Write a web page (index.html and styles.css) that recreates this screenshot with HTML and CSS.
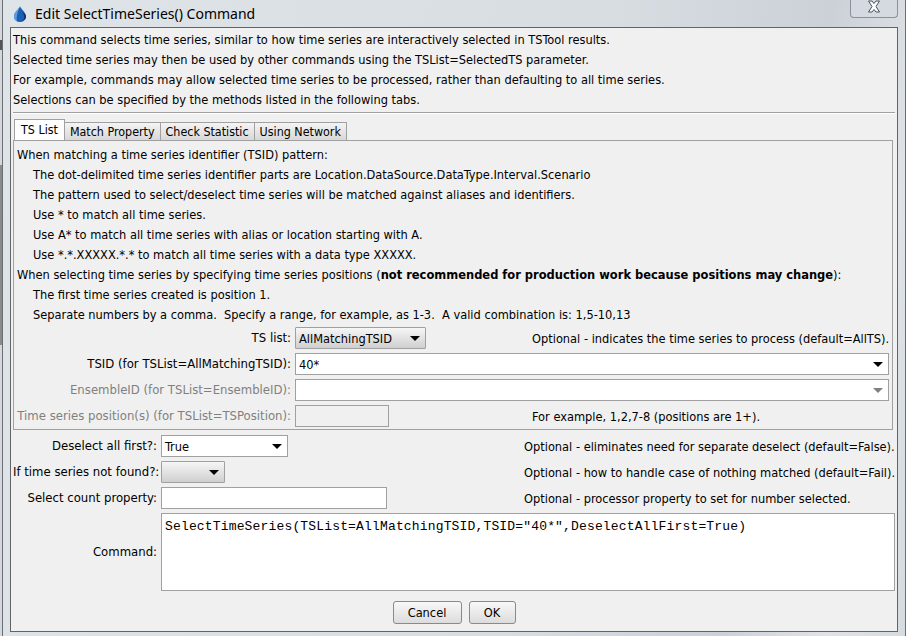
FILE: index.html
```html
<!DOCTYPE html>
<html>
<head>
<meta charset="utf-8">
<title>Edit SelectTimeSeries() Command</title>
<link rel="stylesheet" href="styles.css">
</head>
<body>
<div class="window">
  <div class="titlebar">
    <div class="title-left">
      <svg class="app-icon" width="14" height="16" viewBox="0 0 14 16"><path d="M7 0.5 C9 4 13 6.5 13 10.5 A6 5.5 0 0 1 1 10.5 C1 6.5 5 4 7 0.5Z" fill="#1a5fb4"/><path d="M7 0.5 C5 4 1 6.5 1 10.5 C1 12.5 2 14 4 15 C3 10 5 5 7 0.5Z" fill="#5f9fe0"/><path d="M9 6 C12 9 12 13 9 15 C11.5 14.5 13 12.5 13 10.5 C13 8.5 11 7 9 6Z" fill="#0d2f70"/></svg>
      <span class="title">Edit SelectTimeSeries() Command</span>
    </div>
    <div class="close"><svg width="14" height="13" viewBox="0 0 14 13"><path d="M1.5 1 H5 L7 3.5 L9 1 H12.5 L9 6.5 L12.5 12 H9 L7 9.5 L5 12 H1.5 L5 6.5 Z" fill="#fff" stroke="#4a5060" stroke-width="1"/></svg></div>
  </div>
  <div class="content">
    <div class="intro">
      <div class="line">This command selects time series, similar to how time series are interactively selected in TSTool results.</div>
      <div class="line">Selected time series may then be used by other commands using the TSList=SelectedTS parameter.</div>
      <div class="line">For example, commands may allow selected time series to be processed, rather than defaulting to all time series.</div>
      <div class="line">Selections can be specified by the methods listed in the following tabs.</div>
    </div>
    <div class="separator"></div>
    <div class="tabs">
      <div class="tab active">TS List</div>
      <div class="tab">Match Property</div>
      <div class="tab">Check Statistic</div>
      <div class="tab">Using Network</div>
    </div>
    <div class="panel">
      <div class="pline">When matching a time series identifier (TSID) pattern:</div>
      <div class="pline indent">The dot-delimited time series identifier parts are Location.DataSource.DataType.Interval.Scenario</div>
      <div class="pline indent">The pattern used to select/deselect time series will be matched against aliases and identifiers.</div>
      <div class="pline indent">Use * to match all time series.</div>
      <div class="pline indent">Use A* to match all time series with alias or location starting with A.</div>
      <div class="pline indent">Use *.*.XXXXX.*.* to match all time series with a data type XXXXX.</div>
      <div class="pline">When selecting time series by specifying time series positions (<b>not recommended for production work because positions may change</b>):</div>
      <div class="pline indent">The first time series created is position 1.</div>
      <div class="pline indent">Separate numbers by a comma.&nbsp; Specify a range, for example, as 1-3.&nbsp; A valid combination is: 1,5-10,13</div>
      <div class="panel-form">
        <div class="label">TS list:</div>
        <div class="fieldrow">
          <div class="combo gray w-tslist"><span>AllMatchingTSID</span><i class="arrow"></i></div>
          <div class="note note-tslist">Optional - indicates the time series to process (default=AllTS).</div>
        </div>
        <div class="label">TSID (for TSList=AllMatchingTSID):</div>
        <div class="combo white"><span>40*</span><i class="arrow"></i></div>
        <div class="label disabled">EnsembleID (for TSList=EnsembleID):</div>
        <div class="combo white"><span></span><i class="arrow dim"></i></div>
        <div class="label disabled">Time series position(s) (for TSList=TSPosition):</div>
        <div class="fieldrow">
          <div class="input off w-pos"></div>
          <div class="note note-pos">For example, 1,2,7-8 (positions are 1+).</div>
        </div>
      </div>
    </div>
    <div class="form">
      <div class="label">Deselect all first?:</div>
      <div class="fieldrow">
        <div class="combo white w-deselect"><span>True</span><i class="arrow"></i></div>
        <div class="note note-a">Optional - eliminates need for separate deselect (default=False).</div>
      </div>
      <div class="label">If time series not found?:</div>
      <div class="fieldrow">
        <div class="combo gray w-notfound"><span></span><i class="arrow"></i></div>
        <div class="note note-b">Optional - how to handle case of nothing matched (default=Fail).</div>
      </div>
      <div class="label">Select count property:</div>
      <div class="fieldrow">
        <div class="input w-count"></div>
        <div class="note note-c">Optional - processor property to set for number selected.</div>
      </div>
      <div class="label">Command:</div>
      <div class="command">SelectTimeSeries(TSList=AllMatchingTSID,TSID="40*",DeselectAllFirst=True)</div>
    </div>
    <div class="buttons">
      <div class="btn cancel">Cancel</div>
      <div class="btn ok">OK</div>
    </div>
  </div>
</div>
</body>
</html>
```
FILE: styles.css
```css
* { box-sizing: border-box; }
html, body { margin: 0; padding: 0; height: 100%; }
body {
  width: 906px; height: 636px; overflow: hidden;
  padding-left: 2px;
  font-family: "DejaVu Sans Condensed", "DejaVu Sans", sans-serif;
  font-stretch: condensed;
  font-size: 12.7px; color: #000;
  background:
    linear-gradient(#0000 40px, #555 40px, #555 50px, #0000 50px, #0000 165px, #8a8a8a 165px, #8a8a8a 345px, #0000 345px),
    #d4d8dd;
}
b { font-size: 12.75px; }
.window {
  width: 904px; height: 636px; padding: 0 7px 4px 7px;
  display: flex; flex-direction: column;
  border-left: 1px solid #6a6e75; border-right: 1px solid #6a6e75;
  background: linear-gradient(100deg, #dfe4e8 0%, #d8dde2 60%, #ccd1d8 82%, #dfe3e7 92%, #d6dbe0 100%);
}
.titlebar { height: 27px; flex: none; display: flex; justify-content: space-between; align-items: flex-start; }
.title-left { display: flex; align-items: center; gap: 8px; padding: 5px 0 0 3px; }
.app-icon { flex: none; }
.title { font-family: "Noto Sans", sans-serif; font-stretch: normal; font-size: 14px; line-height: 18px; color: #000; }
.close { width: 48px; height: 18px; border: 1px solid #8c9098; border-top: none; border-radius: 0 0 4px 4px; display: flex; justify-content: center; background: #d5dae0; }
.content { flex: 1; background: #f0f0f0; border: 1px solid #646464; display: flex; flex-direction: column; padding: 2px 2px 0 2px; min-height: 0; }
.line { height: 20px; line-height: 20px; white-space: nowrap; }
.intro { flex: none; }
.separator { height: 2px; margin: 2px 0 5px; background: #a0a0a0; border-bottom: 1px solid #fff; }
.tabs { display: flex; align-items: flex-end; height: 21px; padding-left: 1px; font-size: 12.4px; }
.tab { height: 18px; line-height: 18px; padding: 0 5px; background: linear-gradient(#f4f4f4, #d8d8d8); border: 1px solid #a0a0a0; border-bottom: none; white-space: nowrap; margin-right: -1px; }
.tab.active { height: 21px; line-height: 20px; background: #fff; padding: 0 6px; position: relative; z-index: 1; }
.panel { height: 290px; flex: none; margin-right: 2px; background: #f0f0f0; border: 1px solid #a0a0a0; padding: 4px 3px 0 3px; }
.pline { height: 20px; line-height: 20px; white-space: nowrap; }
.indent { padding-left: 16px; }
.panel-form { display: grid; grid-template-columns: 274px 1fr; column-gap: 4px; row-gap: 4px; margin-top: 2px; }
.label { text-align: right; height: 22px; line-height: 22px; white-space: nowrap; font-size: 13px; }
.label.disabled { color: #808080; }
.fieldrow { display: flex; align-items: center; height: 22px; }
.combo { height: 22px; border: 1px solid #a0a0a0; display: flex; align-items: center; justify-content: space-between; padding: 0 5px 0 3px; }
.combo.white { background: #fff; }
.combo.gray { background: linear-gradient(#f6f6f6, #cfcfcf); border-radius: 1px; }
.arrow { width: 0; height: 0; border-left: 5px solid transparent; border-right: 5px solid transparent; border-top: 5px solid #000; }
.arrow.dim { border-top-color: #808080; }
.input { height: 22px; background: #fff; border: 1px solid #a0a0a0; }
.input.off { background: #f0f0f0; }
.w-tslist { width: 131px; }
.w-pos { width: 94px; }
.w-deselect { width: 127px; }
.w-notfound { width: 64px; }
.w-count { width: 226px; }
.note { white-space: nowrap; }
.note-tslist { margin-left: 106px; }
.note-pos { margin-left: 143px; }
.note-a { margin-left: 236px; }
.note-b { margin-left: 299px; }
.note-c { margin-left: 137px; }
.form { display: grid; grid-template-columns: 144px 1fr; column-gap: 4px; row-gap: 4px; margin-top: 5px; }
.command { height: 78px; background: #fff; border: 1px solid #a0a0a0; padding: 5px 3px; font-family: "Liberation Mono", monospace; font-stretch: normal; font-size: 13px; letter-spacing: 0.16px; line-height: 16px; white-space: nowrap; }
.form .label:nth-last-child(2) { height: 78px; line-height: 78px; }
.buttons { display: flex; justify-content: center; gap: 7px; margin-top: 10px; }
.btn { height: 23px; line-height: 21px; border: 1px solid #8a8a8a; border-radius: 3px; background: linear-gradient(#f8f8f8, #dcdcdc); text-align: center; }
.btn.cancel { width: 69px; }
.btn.ok { width: 47px; }
```
